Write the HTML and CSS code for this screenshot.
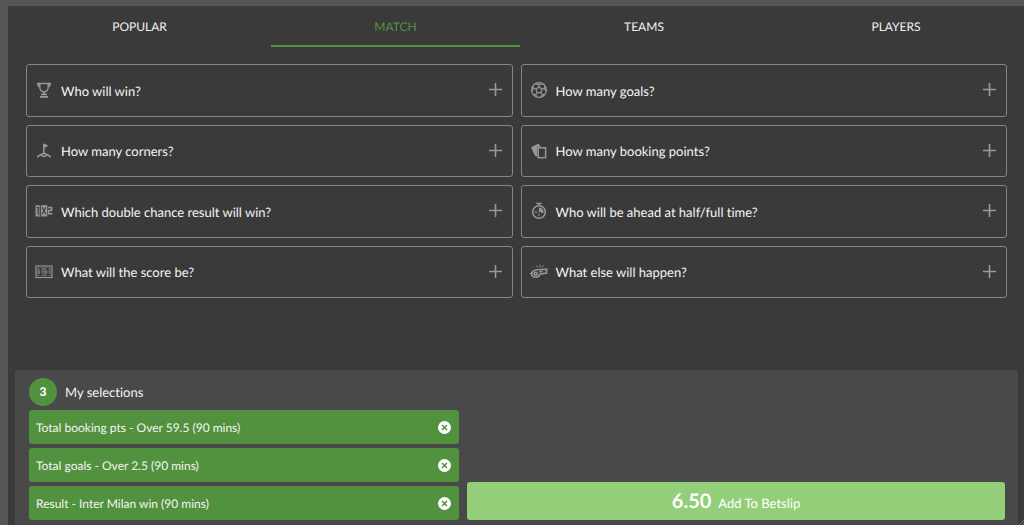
FILE: index.html
```html
<!DOCTYPE html>
<html lang="en">
<head>
<meta charset="utf-8">
<title>Bet builder</title>
<link rel="stylesheet" href="styles.css">
</head>
<body>
<svg class="defs" aria-hidden="true">
  <symbol id="plus" viewBox="0 0 14 14"><path d="M6.500 0v13M0 6.500h13" stroke="currentColor" stroke-width="1.600" fill="none"/></symbol>
  <symbol id="close" viewBox="0 0 14 14"><circle cx="7.500" cy="7.500" r="6.500" fill="#fff"/><path d="M5 5l5 5M10 5l-5 5" stroke="#52923f" stroke-width="1.500"/></symbol>
</svg>
<main class="builder">
  <nav class="tabs">
    <a class="tab" href="#popular">POPULAR</a>
    <a class="tab tab-active" href="#match" aria-current="page">MATCH</a>
    <a class="tab" href="#teams">TEAMS</a>
    <a class="tab" href="#players">PLAYERS</a>
  </nav>
  <section class="questions">
    <button class="question" type="button">
      <svg class="icon" viewBox="0 0 18 18"><path d="M4.800 2.500h8.400v3.500c0 2.700-1.500 4.700-4.200 4.700S4.800 8.700 4.800 6z" fill="none" stroke="currentColor" stroke-width="1.400"/><path d="M1.800 1.800h3v4.900C2.900 6 1.800 4.600 1.800 1.800zM16.200 1.800h-3v4.900c1.900-.7 3-2.100 3-4.900z" fill="currentColor"/><path d="M9 10.700v3M6 13.400h6M5 15.800h8" fill="none" stroke="currentColor" stroke-width="1.800"/></svg>
      <span class="label">Who will win?</span><svg class="plus"><use href="#plus"/></svg>
    </button>
    <button class="question" type="button">
      <svg class="icon" viewBox="0 0 18 18"><g fill="none" stroke="currentColor" stroke-width="1.200"><circle cx="9" cy="9" r="7.400"/><path d="M9 6l3 2.200-1.100 3.500H7.100L6 8.200zM9 6V3.800M12 8.200l2.300-.8M10.900 11.700l1.400 1.900M7.100 11.700l-1.400 1.900M6 8.200l-2.300-.8M5.500 2.600L9 3.800l3.500-1.200M15.300 5l-1 2.400 2 2.800M14.800 13.500l-2.500.1-1.100 2.500M6.800 16.100l-1.100-2.500-2.500-.1M1.700 10.200l2-2.800-1-2.400"/></g></svg>
      <span class="label">How many goals?</span><svg class="plus"><use href="#plus"/></svg>
    </button>
    <button class="question" type="button">
      <svg class="icon" viewBox="0 0 18 18"><g fill="none" stroke="currentColor" stroke-width="1.500"><path d="M8.800 12.500V2"/><path d="M2.300 15.300c1.500-2.200 3.200-2.800 4.500-1.700 1.300 1 3.100 1 4.400 0 1.300-1.100 3-.5 4.500 1.700M5.800 13c.7-2 5.700-2 6.400 0"/></g><path d="M8.800 1.300l4.700 2.500-4.700 2.400z" fill="currentColor"/></svg>
      <span class="label">How many corners?</span><svg class="plus"><use href="#plus"/></svg>
    </button>
    <button class="question" type="button">
      <svg class="icon" viewBox="0 0 18 18"><path d="M1 5.200L8.600 1.400l2.200 3.500H7.300v9.800L5 13.800z" fill="currentColor"/><rect x="8.200" y="5.800" width="7.400" height="9.900" fill="none" stroke="currentColor" stroke-width="1.500"/></svg>
      <span class="label">How many booking points?</span><svg class="plus"><use href="#plus"/></svg>
    </button>
    <button class="question" type="button">
      <svg class="icon" viewBox="0 0 18 18"><path d="M.5 3.200h11.800v11.300H.5z" fill="currentColor"/><path d="M1.500 5.500h1.700v7.300M5.300 3.200v11.300M7.100 5.300l3.700 7M10.800 5.300l-3.700 7" fill="none" stroke="#3a3a3a" stroke-width="1.200"/><path d="M13 5.500h3.600v3.100h-2.900v3.200h3.800" fill="none" stroke="currentColor" stroke-width="1.500"/></svg>
      <span class="label">Which double chance result will win?</span><svg class="plus"><use href="#plus"/></svg>
    </button>
    <button class="question" type="button">
      <svg class="icon" viewBox="0 0 18 18"><g fill="none" stroke="currentColor" stroke-width="1.600"><circle cx="9" cy="10" r="6.300"/><path d="M6.300 1.500h5.400M9 1.500v2.400"/><path d="M4.600 10h3M9 11.400v3M11 10.500h2.500" stroke-width="1"/></g><path d="M9 10V5.500a4.500 4.500 0 0 1 4.500 4.500z" fill="currentColor"/></svg>
      <span class="label">Who will be ahead at half/full time?</span><svg class="plus"><use href="#plus"/></svg>
    </button>
    <button class="question" type="button">
      <svg class="icon" viewBox="0 0 18 18"><rect x="1" y="3" width="16" height="11.500" fill="none" stroke="currentColor" stroke-width="1.200"/><path d="M2.500 4.500h13v8.500h-13z" fill="currentColor" opacity=".6"/><path d="M4 6h2v5.500M3.500 11.800h4M9 6.200v1.600M9 9.800v1.600M11 6h2v5.500M11 11.800h4" fill="none" stroke="#2e2e2e" stroke-width="1.300"/></svg>
      <span class="label">What will the score be?</span><svg class="plus"><use href="#plus"/></svg>
    </button>
    <button class="question" type="button">
      <svg class="icon" viewBox="0 0 18 18"><g fill="none" stroke="currentColor" stroke-width="1.600"><path d="M16.600 6.200L7.500 6.700C3.800 7 1.800 8.400 1.800 10.700c0 2.300 1.700 3.600 3.900 3.600 2.400 0 3.700-1.300 4.100-3.200l6.800-1z"/><circle cx="5.700" cy="10.700" r="1.500"/><path d="M0 10.500h2M9.500 8.600h3"/><path d="M7.800 4.500L6.600 2.600M10 4.200V1.700M12.200 4.400l1.200-1.900" stroke-width="1"/></g></svg>
      <span class="label">What else will happen?</span><svg class="plus"><use href="#plus"/></svg>
    </button>
  </section>
  <section class="slip">
    <header class="slip-head"><span class="count">3</span><h2 class="slip-title">My selections</h2></header>
    <div class="slip-body">
      <ul class="picks">
        <li class="pick"><span>Total booking pts - Over 59.5 (90 mins)</span><button class="remove" type="button" aria-label="Remove total booking pts"><svg class="close"><use href="#close"/></svg></button></li>
        <li class="pick"><span>Total goals - Over 2.5 (90 mins)</span><button class="remove" type="button" aria-label="Remove total goals"><svg class="close"><use href="#close"/></svg></button></li>
        <li class="pick"><span>Result - Inter Milan win (90 mins)</span><button class="remove" type="button" aria-label="Remove result"><svg class="close"><use href="#close"/></svg></button></li>
      </ul>
      <button class="add" type="button"><span class="odds">6.50</span><span>Add To Betslip</span></button>
    </div>
  </section>
  <svg class="grip" viewBox="0 0 5 5" aria-hidden="true"><path d="M0 5L5 0M3 5l2-2" stroke="#888" stroke-width="0.800"/></svg>
</main>
</body>
</html>
```
FILE: styles.css
```css
* { box-sizing: border-box; }
html, body { height: 100%; }
body {
  margin: 0;
  padding: 6px 0 0 8px;
  background: #555;
  color: #f4f4f4;
  font-family: Lato, "Liberation Sans", sans-serif;
  font-size: 13px;
  font-variant-ligatures: none;
  text-rendering: geometricPrecision;
}
button { font: inherit; font-variant-ligatures: none; text-rendering: inherit; color: inherit; cursor: pointer; }
.defs { display: none; }
.builder {
  position: relative;
  display: flex;
  flex-direction: column;
  min-height: 100%;
  background: #3a3a3a;
  border-top-left-radius: 2px;
}
.tabs { display: grid; grid-template-columns: 263fr 249fr 248fr 256fr; }
.tab {
  height: 41px;
  padding-top: 12px;
  border-bottom: 2px solid transparent;
  color: #f0f0f0;
  font-size: 12px;
  line-height: 17px;
  text-align: center;
  text-decoration: none;
}
.tab-active { color: #52923f; border-color: #52923f; }
.questions {
  display: grid;
  grid-template-columns: 1fr 1fr;
  grid-auto-rows: 1fr;
  gap: 8px;
  min-height: 234px;
  margin: 17px 17px 0 18px;
}
.question {
  display: flex;
  align-items: center;
  padding: 0 9px 0 8px;
  background: none;
  border: 1px solid #858585;
  border-radius: 3px;
  text-align: left;
}
.icon { width: 18px; height: 18px; flex: none; color: #969696; }
.label { flex: 1; margin-left: 8px; padding-top: 1px; }
.plus { width: 14px; height: 14px; color: #999; }
.slip {
  margin: auto 6px 0 7px;
  padding: 8px 13px 5px 14px;
  background: #494949;
  border-radius: 3px 3px 0 0;
}
.slip-head { display: flex; align-items: center; gap: 8px; margin-bottom: 4px; }
.count {
  width: 28px;
  height: 28px;
  border-radius: 50%;
  background: #52923f;
  color: #fff;
  font-size: 12px;
  font-weight: 900;
  line-height: 28px;
  text-align: center;
}
.slip-title { margin: 0; font-size: 13px; font-weight: 400; }
.slip-body { display: grid; grid-template-columns: 430fr 538fr; gap: 8px; align-items: end; }
.picks { display: grid; gap: 4px; margin: 0; padding: 0; list-style: none; }
.pick {
  display: flex;
  align-items: center;
  justify-content: space-between;
  height: 34px;
  padding: 0 8px 0 7px;
  border-radius: 3px;
  background: #52923f;
  font-size: 12px;
}
.remove { display: flex; padding: 0; border: 0; background: none; }
.close { width: 14px; height: 14px; }
.add {
  display: flex;
  align-items: baseline;
  justify-content: center;
  gap: 7px;
  height: 38px;
  padding: 7px 0 0;
  border: 0;
  border-radius: 3px;
  background: #93cf78;
  color: #fff;
}
.odds { font-size: 20px; font-weight: 700; }
.grip { position: absolute; right: 0; bottom: 0; width: 5px; height: 5px; }
```
